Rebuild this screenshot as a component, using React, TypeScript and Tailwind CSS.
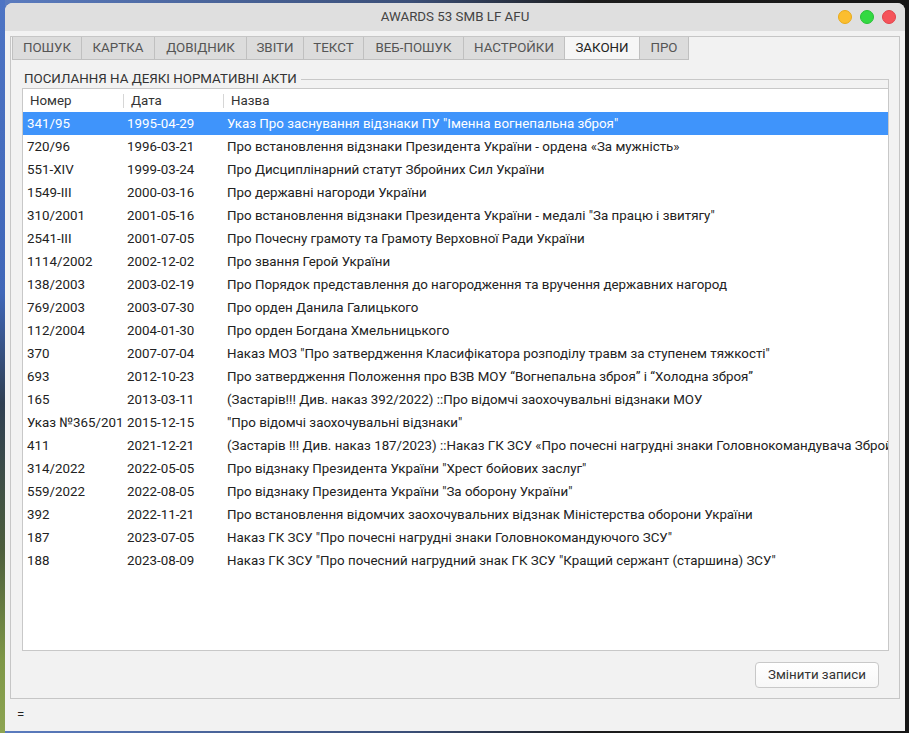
import React from "react";

const tabs = [
  { label: "ПОШУК", w: "w-[70px]" },
  { label: "КАРТКА", w: "w-[73px]" },
  { label: "ДОВІДНИК", w: "w-[92px]" },
  { label: "ЗВІТИ", w: "w-[57px]" },
  { label: "ТЕКСТ", w: "w-[60px]" },
  { label: "ВЕБ-ПОШУК", w: "w-[100px]" },
  { label: "НАСТРОЙКИ", w: "w-[101px]" },
  { label: "ЗАКОНИ", w: "w-[75px]", active: true },
  { label: "ПРО", w: "w-[49px]" },
];

const rows: [string, string, string][] = [
  ["341/95", "1995-04-29", "Указ Про заснування відзнаки ПУ \"Іменна вогнепальна зброя\""],
  ["720/96", "1996-03-21", "Про встановлення відзнаки Президента України - ордена «За мужність»"],
  ["551-XIV", "1999-03-24", "Про Дисциплінарний статут Збройних Сил України"],
  ["1549-III", "2000-03-16", "Про державні нагороди України"],
  ["310/2001", "2001-05-16", "Про встановлення відзнаки Президента України - медалі \"За працю і звитягу\""],
  ["2541-III", "2001-07-05", "Про Почесну грамоту та Грамоту Верховної Ради України"],
  ["1114/2002", "2002-12-02", "Про звання Герой України"],
  ["138/2003", "2003-02-19", "Про Порядок представлення до нагородження та вручення державних нагород"],
  ["769/2003", "2003-07-30", "Про орден Данила Галицького"],
  ["112/2004", "2004-01-30", "Про орден Богдана Хмельницького"],
  ["370", "2007-07-04", "Наказ МОЗ \"Про затвердження Класифікатора розподілу травм за ступенем тяжкості\""],
  ["693", "2012-10-23", "Про затвердження Положення про ВЗВ МОУ “Вогнепальна зброя” і “Холодна зброя”"],
  ["165", "2013-03-11", "(Застарів!!! Див. наказ 392/2022) ::Про відомчі заохочувальні відзнаки МОУ"],
  ["Указ №365/2015", "2015-12-15", "\"Про відомчі заохочувальні відзнаки\""],
  ["411", "2021-12-21", "(Застарів !!! Див. наказ 187/2023) ::Наказ ГК ЗСУ «Про почесні нагрудні знаки Головнокомандувача Збройних Сил України»"],
  ["314/2022", "2022-05-05", "Про відзнаку Президента України \"Хрест бойових заслуг\""],
  ["559/2022", "2022-08-05", "Про відзнаку Президента України \"За оборону України\""],
  ["392", "2022-11-21", "Про встановлення відомчих заохочувальних відзнак Міністерства оборони України"],
  ["187", "2023-07-05", "Наказ ГК ЗСУ \"Про почесні нагрудні знаки Головнокомандуючого ЗСУ\""],
  ["188", "2023-08-09", "Наказ ГК ЗСУ \"Про почесний нагрудний знак ГК ЗСУ \"Кращий сержант (старшина) ЗСУ\""],
];

export default function App() {
  return (
    <div
      className="w-[909px] h-[733px] overflow-hidden flex bg-[linear-gradient(to_right,#5b7cc0_0%,#3b4f78_45%,#1c1c1c_65%,#161616_100%)]"
      style={{ fontFamily: "Roboto, 'Noto Sans', sans-serif" }}
    >
      <div className="w-[5px] h-full bg-[linear-gradient(to_bottom,#4d74c4_0%,#3f66b8_40%,#2f3f52_55%,#4c5d3c_75%,#7e9746_90%,#8da452_100%)]" />
      <div className="w-[900px] flex flex-col pt-[3px]">
        <div className="w-[900px] h-[728px] flex flex-col rounded-t-[8px] overflow-hidden bg-[#f2f2f2]">
          {/* Title bar */}
          <div className="h-[28px] bg-[#dfdfdf] grid grid-cols-[1fr_auto_1fr] items-center shrink-0">
            <div />
            <div className="text-center text-[13.33px] text-[#444]">AWARDS 53 SMB LF AFU</div>
            <div className="flex items-center justify-end gap-[8px] pr-[9px]">
              <div className="w-[14px] h-[14px] rounded-full bg-[#fbbe2f] border border-[#e8a919]" />
              <div className="w-[14px] h-[14px] rounded-full bg-[#33d942] border border-[#27c035]" />
              <div className="w-[14px] h-[14px] rounded-full bg-[#f5535a] border border-[#e0434a]" />
            </div>
          </div>
          {/* Body */}
          <div className="flex-1 flex flex-col pt-[5px] pl-[5px] pr-[5px]">
            <div className="h-[663px] w-[890px] border border-[#c6c6c6] flex flex-col shrink-0">
              {/* Tabs */}
              <div className="flex pl-[1px] h-[23px] shrink-0">
                {tabs.map((t) => (
                  <div
                    key={t.label}
                    className={`${t.w} h-[23px] flex items-center justify-center text-[13.33px] border-r border-b border-[#c0c0c0] ${
                      t.active ? "bg-[#f6f6f6] text-[#222]" : "bg-[#dcdcdc] text-[#555]"
                    } ${t.label === "ПОШУК" ? "border-l" : ""}`}
                  >
                    {t.label}
                  </div>
                ))}
              </div>
              {/* Group */}
              <div className="flex flex-col pl-[11px] pr-[10px] pt-[10px]">
                <div className="flex h-[18px]">
                  <div className="pl-[2px] text-[13.33px] leading-[18px] text-[#333] whitespace-nowrap">
                    ПОСИЛАННЯ НА ДЕЯКІ НОРМАТИВНІ АКТИ
                  </div>
                  <div className="flex-1 ml-[4px] mt-[9px] border-t border-r border-[#c8c8c8]" />
                </div>
                <div className="h-[563px] border border-[#c8c8c8] bg-white flex flex-col overflow-hidden">
                  <div className="h-[23px] flex items-center text-[13.33px] text-[#333] shrink-0">
                    <div className="w-[100px] pl-[7px]">Номер</div>
                    <div className="w-[1px] h-[14px] bg-[#d6d6d6]" />
                    <div className="w-[99px] pl-[7px]">Дата</div>
                    <div className="w-[1px] h-[14px] bg-[#d6d6d6]" />
                    <div className="flex-1 pl-[7px]">Назва</div>
                  </div>
                  {rows.map((r, i) => (
                    <div
                      key={i}
                      className={`h-[23px] flex items-center text-[13.33px] whitespace-nowrap shrink-0 ${
                        i === 0 ? "bg-[#3f94fb] text-white" : "text-[#222]"
                      }`}
                    >
                      <div className="w-[100px] pl-[4px] overflow-hidden">{r[0]}</div>
                      <div className="w-[100px] pl-[4px] overflow-hidden">{r[1]}</div>
                      <div className="flex-1 min-w-0 pl-[4px] overflow-hidden">{r[2]}</div>
                    </div>
                  ))}
                </div>
              </div>
              <div className="flex justify-end pr-[20px] pt-[11px]">
                <button className="w-[124px] h-[26px] rounded-[4px] border border-[#c8c8c8] bg-[linear-gradient(to_bottom,#ffffff,#f7f7f7)] text-[13.33px] text-[#333]">
                  Змінити записи
                </button>
              </div>
            </div>
            <div className="flex-1 flex items-center pl-[7px] text-[13.33px] text-[#222]">=</div>
          </div>
        </div>
      </div>
      <div className="flex-1 h-full bg-[#161616]" />
    </div>
  );
}
